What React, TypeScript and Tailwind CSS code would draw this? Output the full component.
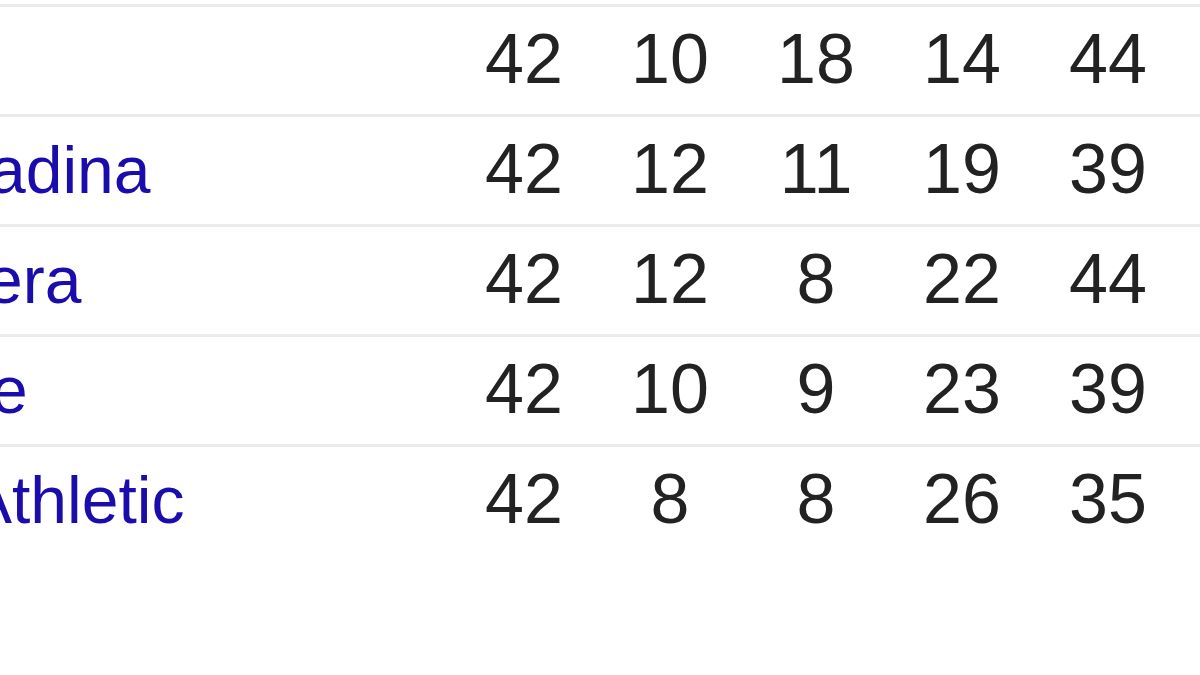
const rows = [
  { name: "", shift: "", stats: ["42", "10", "18", "14", "44"] },
  { name: "adina", shift: "-ml-[11px]", stats: ["42", "12", "11", "19", "39"] },
  { name: "era", shift: "-ml-[14px]", stats: ["42", "12", "8", "22", "44"] },
  { name: "e", shift: "-ml-[9px]", stats: ["42", "10", "9", "23", "39"] },
  { name: "Athletic", shift: "-ml-[32px]", stats: ["42", "8", "8", "26", "35"] },
];

export default function App() {
  return (
    <div
      className="w-[1200px] h-[675px] bg-white overflow-hidden pt-[4px]"
      style={{ fontFamily: '"Liberation Sans", Arial, sans-serif' }}
    >
      {rows.map((r, i) => (
        <div
          key={i}
          className="grid grid-cols-[451px_repeat(5,146px)] h-[110px] items-center border-t-[3px] border-[#ebebeb] pb-1 text-[70px] leading-none"
        >
          {/* team name, cut off at the left edge */}
          <div className="whitespace-nowrap">
            <span className={`inline-block text-[66px] text-[#1a0dab] ${r.shift}`}>{r.name}</span>
          </div>
          {r.stats.map((s, j) => (
            <div key={j} className="text-center text-[#222222]">
              {s}
            </div>
          ))}
        </div>
      ))}
    </div>
  );
}
